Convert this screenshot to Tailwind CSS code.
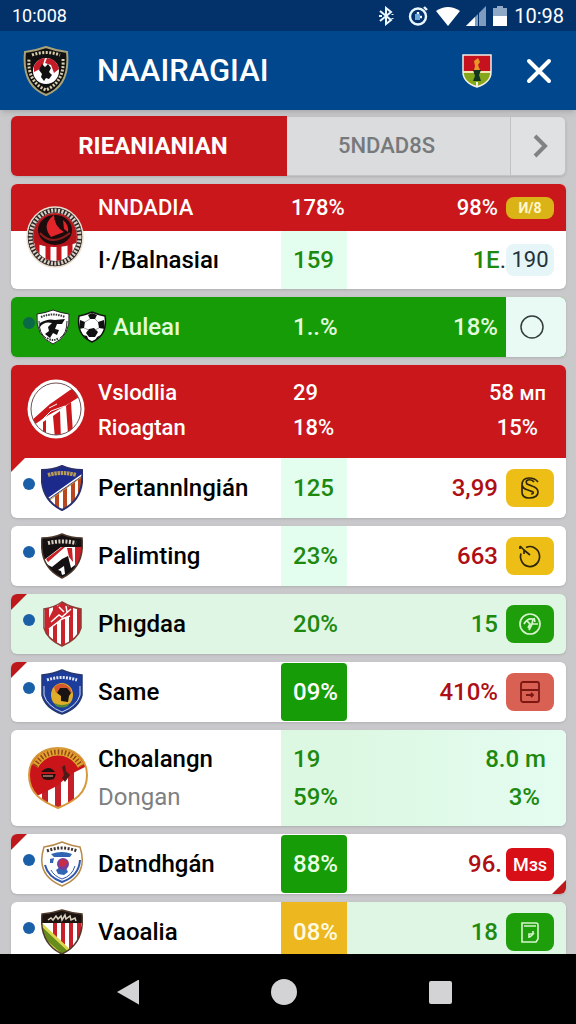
<!DOCTYPE html>
<html lang="en">
<head>
    <meta charset="UTF-8">
    <meta name="viewport" content="width=device-width, initial-scale=1.0">
    <title>NAAIRAGIAI</title>
    <script src="https://cdn.jsdelivr.net/npm/@tailwindcss/browser@4"></script>
</head>
<body class="flex flex-col h-screen overflow-hidden bg-[#c9c9cb] font-[Roboto,'Noto_Sans',sans-serif] font-medium text-2xl leading-7 text-black">

    <!-- Status bar -->
    <div class="flex items-center justify-between h-[31px] shrink-0 px-3 bg-[#03326b] text-white text-xl font-normal">
        <span class="text-lg">10:008</span>
        <div class="flex items-center gap-1.5">
            <svg class="w-4 h-5 mr-1.5" viewBox="0 0 16 20" fill="none" stroke="#e9f7ff" stroke-width="2"><path d="M2 5l11 9-5 4V2l5 4-11 9M14.500 8v1M14.500 12v1M1 10h3"/></svg>
            <svg class="w-6 h-5" viewBox="0 0 24 20" fill="none" stroke="#e9f7ff" stroke-width="2.400"><circle cx="12" cy="10.500" r="8"/><path d="M18 1l3 3"/><path d="M12 6v5h4"/><path fill="#6fa8dc" stroke="none" d="M9 8h5v6H9z"/></svg>
            <svg class="w-6 h-5" viewBox="0 0 24 20" fill="#fff"><path d="M0 5Q12-3 24 5L12 20z"/></svg>
            <svg class="w-5 h-5" viewBox="0 0 20 20"><path fill="#7f9cc0" d="M20 0v20H0z"/><path fill="#fff" d="M9 11v9H0z"/><path stroke="#03326b" d="M12.500 0v20"/></svg>
            <svg class="w-4 h-5" viewBox="0 0 16 20"><path fill="#8fa8c6" d="M5 0h6v2h4v9H1V2h4z"/><path fill="#fff" d="M1 10h14v10H1z"/></svg>
            <span>10:98</span>
        </div>
    </div>

    <!-- App header -->
    <header class="relative z-10 flex items-center h-[79px] shrink-0 pl-[23px] pr-6 bg-[#00478d] shadow-md">
        <svg class="w-[46px] h-[50px]" viewBox="0 0 46 50">
            <path fill="#111" stroke="#aaa37a" stroke-width="2" d="M2 6Q12 5 23 1Q34 5 44 6C46 26 41 42 23 49C5 42 0 26 2 6z"/>
            <path fill="none" stroke="#d8cfae" stroke-width="3" stroke-dasharray="2 1.500" d="M9 9Q23 4 37 9M40 13C41 26 37 38 23 44C9 38 5 26 6 13"/>
            <circle cx="23" cy="25" r="13" fill="#fff"/>
            <path fill="#c31c28" d="M11 20q4-8 11-8l-3 10-8 4zM24 12q10 1 12 11l-5 4-3-8-6-2z"/>
            <path fill="#111" d="M19 18l3 3 3-3 3 4-2 4 3 3-3 4-3-1-2 3-3-4 1-3-3-4z"/>
        </svg>
        <h1 class="ml-7 text-[31px] leading-10 text-white">NAAIRAGIAI</h1>
        <svg class="w-[30px] h-[34px] ml-auto" viewBox="0 0 30 34">
            <path fill="#85a719" d="M1 1h28v17C29 26 24 30 15 33C6 30 1 26 1 18z"/>
            <path fill="#c6111e" d="M1 1h28v17H1z"/>
            <path stroke="#f3e9b0" stroke-width="2" d="M1 18h28"/>
            <path fill="#e8972a" d="M12 7l4-3 2 4-2 3 2 5h-6l1-4z"/>
            <path fill="#12351f" d="M11 16h8l-2 5 2 6h-8l2-5z"/>
            <path fill="none" stroke="#f4efe6" stroke-width="1.500" d="M1 1h28v17C29 26 24 30 15 33C6 30 1 26 1 18z"/>
            <path stroke="#f4efe6" stroke-width="2" d="M15 28v5"/>
        </svg>
        <button class="ml-[34px]" aria-label="Close">
            <svg class="w-[26px] h-[26px]" viewBox="0 0 26 26" stroke="#fff" stroke-width="4" stroke-linecap="round"><path d="M3 3l20 20M23 3L3 23"/></svg>
        </button>
    </header>

    <main class="flex-1 min-h-0 overflow-hidden pl-[11px] pr-2.5 pt-1.5">

        <!-- Tabs -->
        <div class="flex h-[60px] mb-2 rounded-md overflow-hidden shadow">
            <button class="flex-1 pl-2 bg-[#c6181c] text-white font-bold">RIEANIANIAN</button>
            <button class="w-[223px] pr-6 bg-[#dadcdd] border-y border-[#c2c4c5] text-[#77797b] text-[22px]">5NDAD8S</button>
            <button class="flex items-center justify-center w-14 pl-1 bg-[#dfe1e2] border border-[#bfc1c2] rounded-r-md" aria-label="Next">
                <svg class="w-4 h-6" viewBox="0 0 16 24" fill="none" stroke="#808284" stroke-width="4"><path d="M3 2l10 10L3 22"/></svg>
            </button>
        </div>

        <table class="flex flex-col gap-2">

            <tbody class="relative block shrink-0 rounded-md overflow-hidden bg-white shadow">
                <tr class="grid grid-cols-[87px_1fr_66px_219px] h-[47px] bg-[#c9171b] text-white text-[22px]">
                    <td>
                        <svg class="absolute left-[15px] top-[22px] w-[58px] h-[62px]" viewBox="0 0 58 62">
                            <ellipse cx="29" cy="31" rx="28" ry="30" fill="#2b2426" stroke="#e9dfcf" stroke-width="1.500"/>
                            <ellipse cx="29" cy="31" rx="24.500" ry="26.500" fill="none" stroke="#d9d0c2" stroke-width="4" stroke-dasharray="2 1.500"/>
                            <clipPath id="c1"><ellipse cx="29" cy="31" rx="22" ry="24"/></clipPath>
                            <g clip-path="url(#c1)">
                                <path fill="#fff" d="M6 6h46v50H6z"/>
                                <path stroke="#c3131b" stroke-width="5" d="M11 30v30M22 30v30M33 30v30M44 30v30"/>
                                <path fill="#b5141b" d="M5 5h48v31q-24 10-48 0z"/>
                                <ellipse cx="29" cy="24" rx="17" ry="15" fill="#1d0c0d"/>
                                <path fill="#e2242b" d="M28 9q-13 10-3 22l13-5q-10-6-10-17zM37 14q6 5 5 12l-4-3z"/>
                                <path fill="none" stroke="#8d1c1c" stroke-width="2" d="M14 27q12 14 30 0"/>
                            </g>
                        </svg>
                    </td>
                    <td class="self-center">NNDADIA</td>
                    <td class="self-center pl-2.5 whitespace-nowrap">178%</td>
                    <td class="flex items-center justify-end gap-2 pr-3">98%
                        <span class="w-12 h-[22px] rounded-lg bg-[#dab417] text-center text-sm leading-[22px] font-bold text-[#fff8cf]">И/8</span>
                    </td>
                </tr>
                <tr class="grid grid-cols-[87px_1fr_66px_219px] h-[58px]">
                    <td></td>
                    <td class="self-center">I·/Balnasiaı</td>
                    <td class="flex items-center pl-3 bg-[#e3fdee] text-[#1d890f]">159</td>
                    <td class="flex items-center justify-end pr-3">
                        <span class="text-[#1d890f]">1E</span><span class="font-normal text-[#24323a]">.</span>
                        <span class="w-12 h-8 rounded-lg bg-[#e6f5f7] text-center text-[22px] leading-8 font-normal text-[#24323a]">190</span>
                    </td>
                </tr>
            </tbody>

            <tbody class="block shrink-0 rounded-md overflow-hidden bg-[#169c06] shadow">
                <tr class="grid grid-cols-[102px_1fr_66px_159px_60px] h-[60px] text-[#e2fbdc]">
                    <td class="flex items-center pl-3">
                        <span class="size-3 -mt-2 shrink-0 rounded-full bg-[#0a6a48]"></span>
                        <svg class="w-9 h-9 shrink-0" viewBox="0 0 36 36">
                            <path fill="#fff" stroke="#222" d="M2 5Q10 4 18 1Q26 4 34 5Q36 27 18 35Q0 27 2 5z"/>
                            <path fill="none" stroke="#333" stroke-width="2" stroke-dasharray="1.500 1" d="M6 8Q18 3 30 8M12 29q6 4 12 0"/>
                            <path fill="#111" d="M5 14q8-5 15-3l10-1-3 5h-5l-2 5 4 1-2 5-4-2-3 5-5-4 4-3-1-4 4-4q-8-2-12 4z"/>
                            <path fill="none" stroke="#222" d="M4 12q0 13 7 17M32 12q0 13-7 17"/>
                        </svg>
                        <svg class="w-[30px] h-8 ml-1.5 shrink-0" viewBox="0 0 30 32">
                            <path fill="#fff" stroke="#111" stroke-width="1.500" d="M2 5Q8 4 15 1Q22 4 28 5Q31 24 15 31Q-1 24 2 5z"/>
                            <path fill="#111" d="M11 4l4-2 5 2-2 4h-5zM3 9l5 2-1 6-5 1zM27 9l-6 2 1 6 6 1zM12 18l5-1 4 4-3 5h-6l-3-4zM6 24l4 1 2 5zM24 24l-4 2-2 4z"/>
                            <path fill="none" stroke="#777" stroke-width=".7" d="M13 8l-5 3M18 8l3 3M7 17l5 2M22 17l-4 2"/>
                        </svg>
                    </td>
                    <td class="self-center">Auleaı</td>
                    <td class="self-center pl-3 whitespace-nowrap">1..%</td>
                    <td class="self-center pr-2 text-right">18%</td>
                    <td class="flex items-center justify-center pr-2 bg-[#e9f9f4]">
                        <svg class="size-6" viewBox="0 0 24 24" fill="none" stroke="#333d3c" stroke-width="1.500"><circle cx="12" cy="12" r="11"/></svg>
                    </td>
                </tr>
            </tbody>

            <tbody class="relative block shrink-0 rounded-md overflow-hidden bg-white shadow">
                <tr class="grid grid-cols-[87px_1fr_66px_219px] h-[93px] bg-[#c9171b] text-white text-[22px] leading-[35px]">
                    <td class="pl-4 pt-3.5">
                        <svg class="w-[58px] h-[60px]" viewBox="0 0 58 60">
                            <ellipse cx="29" cy="30" rx="28.500" ry="29.500" fill="#fff"/>
                            <clipPath id="c2"><ellipse cx="29" cy="30" rx="25" ry="26"/></clipPath>
                            <g clip-path="url(#c2)" fill="#c9171b">
                                <path d="M4 42L23 25l3-2 17-12 12-6v11L38 27 20 37 4 48z"/>
                                <path d="M26 37l7-5 1 28h-6zM39 27l5-4 2 32h-5z"/>
                                <path d="M16 43l3-2v15h-3z"/>
                                <path fill="none" stroke="#fff" d="M10 46l14-14 14-5M22 29l8-4"/>
                            </g>
                            <ellipse cx="29" cy="30" rx="25" ry="26" fill="none" stroke="#6d5257" stroke-width="1"/>
                        </svg>
                    </td>
                    <td class="pt-2.5">Vslodlia<br>Rioagtan</td>
                    <td class="pt-2.5 pl-3">29<br>18%</td>
                    <td class="flex flex-col items-end pt-2.5 pr-5"><span>58 <span class="text-xl">мп</span></span><span class="pr-2">15%</span></td>
                </tr>
                <tr class="grid grid-cols-[87px_1fr_66px_219px] h-[60px]">
                    <td class="flex items-center gap-1.5 pl-3">
                        <span class="absolute left-0 top-[93px] size-3.5 bg-[#c9171b] [clip-path:polygon(0_0,100%_0,0_100%)]"></span>
                        <span class="size-3 -mt-2 shrink-0 rounded-full bg-[#1a60a8]"></span>
                        <svg class="w-[42px] h-[46px] shrink-0" viewBox="0 0 42 46">
                            <clipPath id="s1"><path d="M1 5Q12 5 21 1Q30 5 41 5Q44 34 21 45Q-2 34 1 5z"/></clipPath>
                            <g clip-path="url(#s1)">
                                <path fill="#fff" d="M0 0h42v46H0z"/>
                                <path stroke="#b8471f" stroke-width="4" d="M16 28v20M24 20v28M32 14v28M39 8v26"/>
                                <path fill="#1c2a8c" d="M0 0h42v11L6 36H0z"/>
                                <path stroke="#fff" stroke-width="1.500" d="M5 35L42 9"/><path stroke="#c7912f" d="M6 37L42 11"/>
                            </g>
                            <path stroke="#b79a55" stroke-width="4" stroke-dasharray="2.500 .7" d="M7 10q14-4 28 0" fill="none"/>
                            <path fill="none" stroke="#28306f" stroke-width="2" d="M1 5Q12 5 21 1Q30 5 41 5Q44 34 21 45Q-2 34 1 5z"/>
                        </svg>
                    </td>
                    <td class="self-center">Pertannlngián</td>
                    <td class="flex items-center pl-3 bg-[#e3fdee] text-[#1d890f]">125</td>
                    <td class="flex items-center justify-end gap-2 pr-3 text-[#ad0f14]">3,99
                        <span class="flex items-center justify-center w-12 h-[38px] rounded-lg bg-[#edbf16]">
                            <svg class="w-5 h-6" viewBox="0 0 20 24" fill="none" stroke="#2f2508" stroke-width="1.700"><path d="M18 6Q15 2 9 2 2 2 2 9v7q0 6 7 6 9 0 9-6 0-4-6-6l-5-2q-2-3 1-4 4-1 6 2M2 9q1 4 6 5l5 2q1 2-2 2"/></svg>
                        </span>
                    </td>
                </tr>
            </tbody>

            <tbody class="block shrink-0 rounded-md overflow-hidden bg-white shadow">
                <tr class="grid grid-cols-[87px_1fr_66px_219px] h-[60px]">
                    <td class="flex items-center gap-1.5 pl-3">
                        <span class="size-3 -mt-2 shrink-0 rounded-full bg-[#1a60a8]"></span>
                        <svg class="w-[42px] h-[46px] shrink-0" viewBox="0 0 42 46">
                            <clipPath id="s2"><path d="M1 5Q12 5 21 1Q30 5 41 5Q44 34 21 45Q-2 34 1 5z"/></clipPath>
                            <g clip-path="url(#s2)">
                                <path fill="#151112" d="M0 0h42v46H0z"/>
                                <path fill="#fff" d="M3 27l17-13h14v18l-4 3-3-12-6 3-10 8-4-2z"/>
                                <path fill="#c91f25" d="M34 14h8v22l-8 3zM26 15h5l1 14-4-5zM7 29l17-15h-3L5 26z"/>
                                <path fill="#fff" d="M17 37l6-4 1 8-3 1-1-4z"/>
                            </g>
                            <path stroke="#d9d1c5" stroke-width="4" stroke-dasharray="2 1.500" d="M7 10q14-3 28 0" fill="none"/>
                            <path fill="none" stroke="#4d3a2c" stroke-width="1.500" d="M1 5Q12 5 21 1Q30 5 41 5Q44 34 21 45Q-2 34 1 5z"/>
                        </svg>
                    </td>
                    <td class="self-center">Palimting</td>
                    <td class="flex items-center pl-3 bg-[#e3fdee] text-[#1d890f]">23%</td>
                    <td class="flex items-center justify-end gap-2 pr-3 text-[#ad0f14]">663
                        <span class="flex items-center justify-center w-12 h-[38px] rounded-lg bg-[#edbf16]">
                            <svg class="size-6" viewBox="0 0 24 24" fill="none" stroke="#2f2508" stroke-width="1.700"><path d="M8 3.500a9.500 10 0 1 1-5 6M2 2l4 4v4M6 6l6 5M2 2v3"/></svg>
                        </span>
                    </td>
                </tr>
            </tbody>

            <tbody class="relative block shrink-0 rounded-md overflow-hidden bg-[#def6e3] shadow">
                <tr class="grid grid-cols-[87px_1fr_66px_219px] h-[60px]">
                    <td class="flex items-center gap-1.5 pl-3">
                        <span class="absolute left-0 top-0 size-4 bg-[#bd181b] [clip-path:polygon(0_0,100%_0,0_100%)]"></span>
                        <span class="size-3 -mt-2 shrink-0 rounded-full bg-[#1a60a8]"></span>
                        <svg class="w-[42px] h-[46px] shrink-0" viewBox="0 0 42 46">
                            <clipPath id="s3"><path d="M3 8Q14 6 21 1Q29 6 40 8V27Q37 38 21 45Q6 38 3 27z"/></clipPath>
                            <g clip-path="url(#s3)">
                                <path fill="#fff" d="M0 0h42v46H0z"/>
                                <path stroke="#c9242b" stroke-width="4" d="M6 0v46M14 0v46M22 0v46M30 0v46M38 0v46"/>
                                <path fill="#c9242b" d="M12 9l9-8 9 6 1 7-13 6-10 8V17z"/>
                                <path fill="none" stroke="#fff" stroke-width="1.500" d="M10 21l8-7 3 2 9-8M8 28l13-10 8-3M18 6l5 5M25 5l1 6"/>
                            </g>
                            <path fill="none" stroke="#8e3a36" stroke-width="1.500" d="M3 8Q14 6 21 1Q29 6 40 8V27Q37 38 21 45Q6 38 3 27z"/>
                        </svg>
                    </td>
                    <td class="self-center">Phıgdaa</td>
                    <td class="self-center pl-3 whitespace-nowrap text-[#1d890f]">20%</td>
                    <td class="flex items-center justify-end gap-2 pr-3 text-[#1d890f]">15
                        <span class="flex items-center justify-center w-12 h-[38px] rounded-lg bg-[#1f9e0c]">
                            <svg class="size-6" viewBox="0 0 24 24" fill="none" stroke="#d6f5cc" stroke-width="1.700"><circle cx="12" cy="12" r="10"/><path d="M6 12q3-6 9-5l-1 5 6 0M9 9l3 3-2 4M14 12l-3 6M16 6l1 4"/></svg>
                        </span>
                    </td>
                </tr>
            </tbody>

            <tbody class="relative block shrink-0 rounded-md overflow-hidden bg-white shadow">
                <tr class="grid grid-cols-[87px_1fr_66px_219px] h-[60px]">
                    <td class="flex items-center gap-1.5 pl-3">
                        <span class="absolute left-0 top-0 size-4 bg-[#bd181b] [clip-path:polygon(0_0,100%_0,0_100%)]"></span>
                        <span class="size-3 -mt-2 shrink-0 rounded-full bg-[#1a60a8]"></span>
                        <svg class="w-[42px] h-[46px] shrink-0" viewBox="0 0 42 46">
                            <path fill="#1d3d9c" stroke="#26386e" stroke-width="1.500" d="M1 6Q12 5 21 1Q30 5 41 6V26Q38 39 21 45Q4 39 1 26z"/>
                            <path fill="none" stroke="#c9d7f2" d="M3 17v9q3 11 18 17 15-6 18-17v-9"/>
                            <path fill="none" stroke="#dfe6f5" stroke-width="3" stroke-dasharray="2 1.200" d="M6 11q15-5 30 0"/>
                            <ellipse cx="21" cy="26" rx="11" ry="12" fill="#e0ad2b"/>
                            <path fill="#d4582b" d="M13 18q8-7 16 1l2 5-8-3-8 3z"/>
                            <path fill="#191414" d="M19 19l7 0 4 5-2 3-1 6-7-1 0-5-4-3z"/>
                            <path fill="#4f8a3b" d="M13 34q8 4 16 0l-2 3q-6 3-12 0z"/>
                        </svg>
                    </td>
                    <td class="self-center">Same</td>
                    <td class="flex items-center pl-3 my-px rounded-sm bg-[#169c06] text-white">09%</td>
                    <td class="flex items-center justify-end gap-2 pr-3 text-[#ad0f14]">410%
                        <span class="flex items-center justify-center w-12 h-[38px] rounded-lg bg-[#d96154]">
                            <svg class="size-6" viewBox="0 0 24 24" fill="none" stroke="#7c1712" stroke-width="1.800"><rect x="3" y="2" width="18" height="20" rx="2"/><path d="M3 10h18M8 15h7M13 13l2 2-2 2"/></svg>
                        </span>
                    </td>
                </tr>
            </tbody>

            <tbody class="block shrink-0 rounded-md overflow-hidden bg-white shadow">
                <tr class="grid grid-cols-[87px_1fr_66px_219px] h-24 leading-[38px]">
                    <td class="flex items-center pl-4">
                        <svg class="w-[62px] h-[62px]" viewBox="0 0 62 62">
                            <clipPath id="c3"><path d="M31 1C48 1 60 12 60 28C60 46 48 54 31 61C14 54 2 46 2 28C2 12 14 1 31 1z"/></clipPath>
                            <g clip-path="url(#c3)">
                                <path fill="#fff" d="M0 0h62v62H0z"/>
                                <path stroke="#c4202a" stroke-width="6" d="M18 30v32M31 30v32M44 20v42"/>
                                <path fill="#c91519" d="M0 0h62v18L46 26 28 40 12 48 0 50z"/>
                            </g>
                            <path fill="none" stroke="#e0a52c" stroke-width="7" d="M8 19Q16 5 31 5T54 19"/>
                            <path fill="none" stroke="#94431c" stroke-width="5" stroke-dasharray="1.500 2" d="M8 19Q16 5 31 5T54 19"/>
                            <path fill="#26100f" d="M14 25q8-8 14 0zM14 27h15l-2 5q-6 2-11 0z"/>
                            <path fill="#501a18" d="M35 20l3-2 1 6 4 4-5 7-3-4 2-3z"/>
                            <path fill="none" stroke="#e9b0a0" d="M16 29h10"/>
                            <path fill="none" stroke="#d7983a" stroke-width="2" d="M31 1C48 1 60 12 60 28C60 46 48 54 31 61C14 54 2 46 2 28C2 12 14 1 31 1z"/>
                        </svg>
                    </td>
                    <td class="pt-2.5">Choalangn<br><span class="font-normal text-[#7d7f81]">Dongan</span></td>
                    <td class="pt-2.5 pl-3 bg-[#dcf8e2] text-[#1d890f]">19<br>59%</td>
                    <td class="flex flex-col items-end pt-2.5 pr-5 bg-linear-to-r from-[#dcf8e2] to-[#e5fcf1] text-[#1d890f]"><span>8.0 m</span><span class="pr-1.5">3%</span></td>
                </tr>
            </tbody>

            <tbody class="relative block shrink-0 rounded-md overflow-hidden bg-white shadow">
                <tr class="grid grid-cols-[87px_1fr_66px_219px] h-[60px]">
                    <td class="flex items-center gap-1.5 pl-3">
                        <span class="absolute left-0 top-0 size-4 bg-[#bd181b] [clip-path:polygon(0_0,100%_0,0_100%)]"></span>
                        <span class="size-3 -mt-2 shrink-0 rounded-full bg-[#1a60a8]"></span>
                        <svg class="w-[42px] h-[46px] shrink-0" viewBox="0 0 42 46">
                            <path fill="#fff" stroke="#b88b48" stroke-width="1.500" d="M3 6Q12 5 21 1Q31 5 39 6Q48 34 21 45Q-6 34 3 6z"/>
                            <path fill="none" stroke="#3158ad" stroke-width="2" d="M39 19Q38 35 21 41Q7 36 4 24"/>
                            <path fill="none" stroke="#3d3430" stroke-width="3" stroke-dasharray="2 1.500" d="M6 10q15-6 30 0"/>
                            <path fill="#3065b5" d="M10 13q11-4 21 0l-2 3H13zM9 18l4-1-1 5h-3zM15 29l4-3 6 1 2 4-4 3-6-1z"/>
                            <circle cx="22" cy="23" r="6" fill="#7340a0"/><path fill="#c92d45" d="M18 20q4-4 9 1l-4 5-5-1z"/>
                            <path fill="none" stroke="#3158ad" d="M34 25q-3 10-13 13-8-3-11-9"/>
                        </svg>
                    </td>
                    <td class="self-center">Datndhgán</td>
                    <td class="flex items-center pl-3 my-px rounded-sm bg-[#169c06] text-[#eaffe4]">88%</td>
                    <td class="flex items-center justify-end gap-1 pr-3 text-[#ad0f14]">96.
                        <span class="w-12 h-[33px] rounded-md bg-[#d80f17] text-center text-lg leading-[33px] text-white">Mзs</span>
                        <span class="absolute right-0 bottom-0 size-3.5 bg-[#bd181b] [clip-path:polygon(100%_0,100%_100%,0_100%)]"></span>
                    </td>
                </tr>
            </tbody>

            <tbody class="block shrink-0 rounded-md overflow-hidden bg-white shadow">
                <tr class="grid grid-cols-[87px_1fr_66px_219px] h-[60px]">
                    <td class="flex items-center gap-1.5 pl-3">
                        <span class="size-3 -mt-2 shrink-0 rounded-full bg-[#1a60a8]"></span>
                        <svg class="w-[42px] h-[46px] shrink-0" viewBox="0 0 42 46">
                            <clipPath id="s4"><path d="M1 5Q12 4 21 1Q30 4 41 5Q44 34 21 45Q-2 34 1 5z"/></clipPath>
                            <g clip-path="url(#s4)">
                                <path fill="#fff" d="M0 0h42v46H0z"/>
                                <path stroke="#c8202b" stroke-width="4" d="M14 10v36M22 10v36M30 10v36M38 10v36"/>
                                <path fill="#688c1c" d="M0 14l32 30-8 4H0z"/>
                                <path stroke="#d8d94a" stroke-width="3" d="M0 15l32 30M0 28l20 18"/>
                                <path fill="#1c1210" d="M0 0h42v14H0z"/>
                            </g>
                            <path fill="none" stroke="#d9d0bd" stroke-width="1.500" d="M7 11l3-2 2 2 3-4 2 3 3-3 1 4 3-5 1 4 4-3 1 4 4-2 1 3"/>
                            <path fill="none" stroke="#4d3a2c" stroke-width="1.500" d="M1 5Q12 4 21 1Q30 4 41 5Q44 34 21 45Q-2 34 1 5z"/>
                        </svg>
                    </td>
                    <td class="self-center">Vaoalia</td>
                    <td class="flex items-center pl-3 bg-[#ecb71f] text-[#fffbe0]">08%</td>
                    <td class="flex items-center justify-end gap-2 pr-3 bg-[#def6e3] text-[#1d890f]">18
                        <span class="flex items-center justify-center w-12 h-[38px] rounded-lg bg-[#1f9e0c]">
                            <svg class="size-6" viewBox="0 0 24 24" fill="none" stroke="#d6f5cc" stroke-width="1.600"><path d="M4 3h14q2 0 2 2v14l-2 3H4zM6 6h12M11 18v-4h4l-3 3M15 11v3"/></svg>
                        </span>
                    </td>
                </tr>
            </tbody>

        </table>
    </main>

    <!-- System navigation -->
    <nav class="flex items-center justify-center h-[70px] shrink-0 pt-1.5 pr-2 gap-[132px] bg-black">
        <button aria-label="Back"><svg class="w-[22px] h-[26px]" viewBox="0 0 22 26" fill="#d3d3d5"><path d="M22 1v24q0 1-1 0L0 13 21 1z"/></svg></button>
        <button class="size-[26px] rounded-full bg-[#d3d3d5]" aria-label="Home"></button>
        <button class="size-[23px] rounded-xs bg-[#d3d3d5]" aria-label="Recent"></button>
    </nav>

</body>
</html>
